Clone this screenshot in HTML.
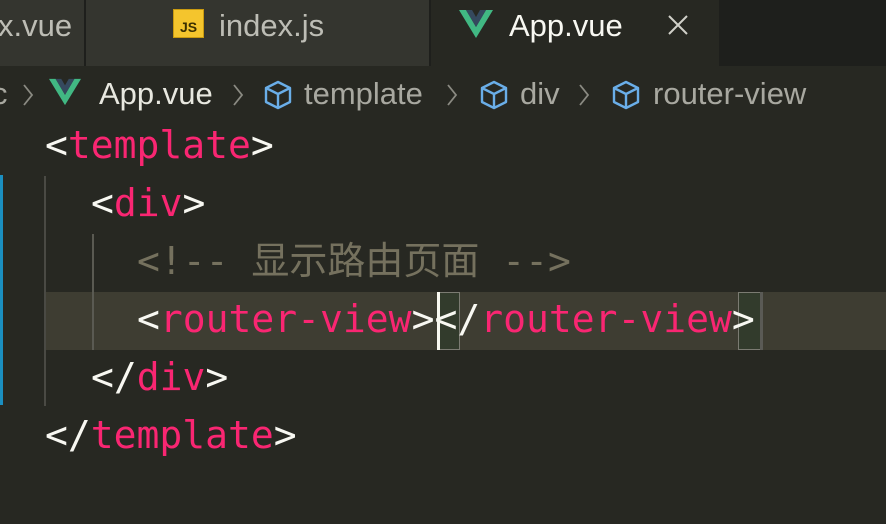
<!DOCTYPE html>
<html><head><meta charset="utf-8"><style>
*{margin:0;padding:0;box-sizing:border-box}
body{width:886px;height:524px;background:#272822;position:relative;overflow:hidden;font-family:"Liberation Sans","Noto Sans CJK SC",sans-serif}
.tabs{position:absolute;left:0;top:0;width:886px;height:66px;background:#1e1f1c}
.tab{position:absolute;top:0;height:66px;background:#34352f;color:#bdbdb5;font-size:31px;line-height:52px}
.bc{position:absolute;top:66px;left:0;width:886px;height:56px;color:#a8a8a0;font-size:31px;line-height:56px;white-space:nowrap}
.ln{position:absolute;left:0;height:58px;line-height:58px;font-family:"DejaVu Sans Mono","Liberation Mono","Noto Sans CJK SC",monospace;font-size:38px;color:#f8f8f2;white-space:pre}
.t{color:#f92672}.c{color:#75715e}
.guide{position:absolute;width:2px;background:#4a4a44}
.ch{position:absolute;top:17px}
</style></head><body>
<div class="tabs">
 <div class="tab" style="left:0;width:84px"><span style="position:absolute;left:-2px">x.vue</span></div>
 <div class="tab" style="left:86px;width:343px">
  <span style="position:absolute;left:87px;top:9px;width:31px;height:29px;background:#f4c52d;border:1px solid #c99a10;color:#3a2f00;font-size:14px;font-weight:bold;line-height:34px;text-align:center">JS</span>
  <span style="position:absolute;left:133px">index.js</span></div>
 <div class="tab" style="left:431px;width:288px;background:#272822;color:#f8f8f2">
  <svg style="position:absolute;left:28px;top:10px" width="34" height="28" viewBox="0 0 34 28"><path d="M0 0h7l10 17L27 0h7L17 28z" fill="#41b883"/><path d="M7 0h6l4 7 4-7h6L17 17z" fill="#35495e"/></svg>
  <span style="position:absolute;left:78px">App.vue</span>
  <svg style="position:absolute;left:237px;top:15px" width="20" height="20" viewBox="0 0 20 20" stroke="#d0d0c8" stroke-width="2"><path d="M1 1L19 19M19 1L1 19"/></svg></div>
</div>
<div class="bc">
 <span style="position:absolute;left:-8px">c</span>
 <svg class="ch" style="left:22px" width="12" height="24" viewBox="0 0 12 24" fill="none" stroke="#8a8a82" stroke-width="1.8"><path d="M2 2l8 10-8 10"/></svg>
 <svg style="position:absolute;left:49px;top:12px" width="32" height="28" viewBox="0 0 34 28"><path d="M0 0h7l10 17L27 0h7L17 28z" fill="#41b883"/><path d="M7 0h6l4 7 4-7h6L17 17z" fill="#35495e"/></svg>
 <span style="position:absolute;left:99px;color:#e8e8e0">App.vue</span>
 <svg class="ch" style="left:232px" width="12" height="24" viewBox="0 0 12 24" fill="none" stroke="#8a8a82" stroke-width="1.8"><path d="M2 2l8 10-8 10"/></svg>
 <svg style="position:absolute;left:262px;top:13px" width="32" height="32" viewBox="0 0 32 32" fill="none" stroke="#6aaee8" stroke-width="2.4" stroke-linejoin="round"><path d="M16 3l12 6v14l-12 6-12-6V9z M4 9l12 6 12-6 M16 15v14"/></svg>
 <span style="position:absolute;left:304px">template</span>
 <svg class="ch" style="left:446px" width="12" height="24" viewBox="0 0 12 24" fill="none" stroke="#8a8a82" stroke-width="1.8"><path d="M2 2l8 10-8 10"/></svg>
 <svg style="position:absolute;left:478px;top:13px" width="32" height="32" viewBox="0 0 32 32" fill="none" stroke="#6aaee8" stroke-width="2.4" stroke-linejoin="round"><path d="M16 3l12 6v14l-12 6-12-6V9z M4 9l12 6 12-6 M16 15v14"/></svg>
 <span style="position:absolute;left:520px">div</span>
 <svg class="ch" style="left:578px" width="12" height="24" viewBox="0 0 12 24" fill="none" stroke="#8a8a82" stroke-width="1.8"><path d="M2 2l8 10-8 10"/></svg>
 <svg style="position:absolute;left:610px;top:13px" width="32" height="32" viewBox="0 0 32 32" fill="none" stroke="#6aaee8" stroke-width="2.4" stroke-linejoin="round"><path d="M16 3l12 6v14l-12 6-12-6V9z M4 9l12 6 12-6 M16 15v14"/></svg>
 <span style="position:absolute;left:653px">router-view</span>
</div>
<div style="position:absolute;left:0;top:175px;width:3px;height:230px;background:#1b8fc0"></div>
<div style="position:absolute;left:45px;top:292px;width:841px;height:58px;background:#3e3d32"></div>
<div class="guide" style="left:44px;top:176px;height:230px"></div>
<div class="guide" style="left:92px;top:234px;height:116px;background:#5a5a52"></div>
<div style="position:absolute;left:438px;top:292px;width:22px;height:58px;background:#323b2c;border:1px solid #7b7b72"></div>
<div style="position:absolute;left:738px;top:292px;width:23px;height:58px;background:#323b2c;border:1px solid #7b7b72"></div>
<div style="position:absolute;left:760px;top:292px;width:3px;height:58px;background:#5a5a55"></div>
<div class="ln" style="top:116px;left:45px">&lt;<span class="t">template</span>&gt;</div>
<div class="ln" style="top:174px;left:91px">&lt;<span class="t">div</span>&gt;</div>
<div class="ln c" style="top:232px;left:137px">&lt;!-- 显示路由页面 --&gt;</div>
<div class="ln" style="top:290px;left:137px">&lt;<span class="t">router-view</span>&gt;&lt;/<span class="t">router-view</span>&gt;</div>
<div style="position:absolute;left:437px;top:292px;width:3px;height:58px;background:#f8f8f0"></div>
<div class="ln" style="top:348px;left:91px">&lt;/<span class="t">div</span>&gt;</div>
<div class="ln" style="top:406px;left:45px">&lt;/<span class="t">template</span>&gt;</div>
</body></html>
